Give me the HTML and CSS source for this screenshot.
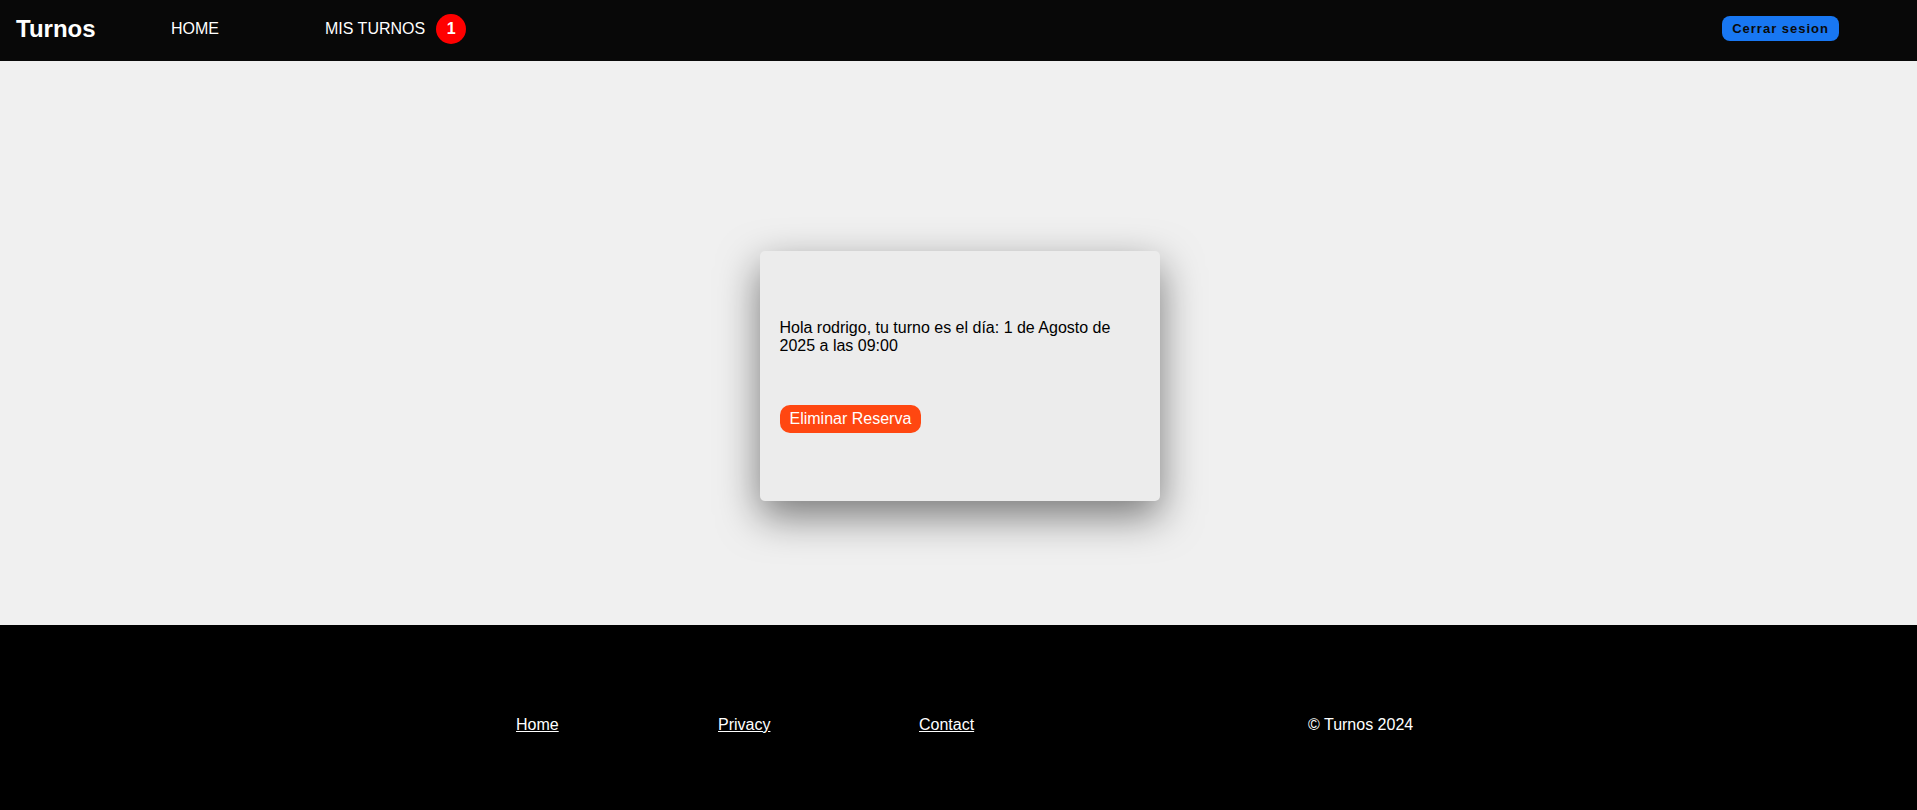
FILE: index.html
```html
<!DOCTYPE html>
<html lang="es">
<head>
<meta charset="utf-8">
<title>Turnos</title>
<link rel="stylesheet" href="styles.css">
</head>
<body>
<header class="navbar">
  <a class="brand" href="#">Turnos</a>
  <nav class="nav-links">
    <a class="nav-link" href="#">HOME</a>
    <a class="nav-link" href="#">MIS TURNOS <span class="badge">1</span></a>
  </nav>
  <button class="logout">Cerrar sesion</button>
</header>
<main class="main">
  <section class="card">
    <p class="card-text">Hola rodrigo, tu turno es el día: 1 de Agosto de 2025 a las 09:00</p>
    <button class="delete">Eliminar Reserva</button>
  </section>
</main>
<footer class="footer">
  <ul class="footer-links">
    <li><a href="#">Home</a></li>
    <li><a href="#">Privacy</a></li>
    <li><a href="#">Contact</a></li>
  </ul>
  <span class="copy">© Turnos 2024</span>
</footer>
</body>
</html>
```
FILE: styles.css
```css
* { box-sizing: border-box; }
html, body { margin: 0; padding: 0; }
body {
  font-family: "Liberation Sans", Arial, sans-serif;
  font-size: 16px;
  background: #f0f0f0;
  color: #000;
  height: 100vh;
  display: flex;
  flex-direction: column;
}
.navbar {
  height: 61px;
  background: #080808;
  display: flex;
  align-items: center;
  padding: 0 0 4px 16px;
}
.brand {
  color: #fff;
  text-decoration: none;
  font-weight: bold;
  font-size: 24px;
  width: 155px;
}
.nav-links {
  display: flex;
  align-items: center;
  flex: 1;
}
.nav-link {
  color: #fff;
  text-decoration: none;
  display: flex;
  align-items: center;
  gap: 11px;
  margin-right: 106px;
}
.badge {
  display: inline-flex;
  align-items: center;
  justify-content: center;
  width: 30px;
  height: 30px;
  border-radius: 50%;
  background: #ff0000;
  color: #fff;
  font-weight: bold;
  font-size: 16px;
}
.logout {
  font-family: "Liberation Sans", Arial, sans-serif;
  background: #1877f2;
  color: #0a0a0a;
  border: none;
  border-radius: 8px;
  font-size: 13px;
  font-weight: bold;
  letter-spacing: 1px;
  height: 25px;
  padding: 0 10px;
  margin-right: 78px;
}
.main {
  flex: 1;
  display: flex;
  justify-content: center;
  align-items: flex-start;
  padding: 190px 0 0 2px;
}
.card {
  width: 400px;
  height: 250px;
  background: #ececec;
  border-radius: 5px;
  box-shadow: 0 15px 40px rgba(0, 0, 0, 0.5);
  padding: 0 20px;
  display: flex;
  flex-direction: column;
  justify-content: center;
  align-items: flex-start;
  gap: 50px;
}
.card-text {
  margin: 0;
}
.delete {
  font-family: "Liberation Sans", Arial, sans-serif;
  font-size: 16px;
  background: #ff4711;
  color: #fff;
  border: none;
  border-radius: 10px;
  height: 28px;
  padding: 0 10px;
}
.footer {
  height: 185px;
  background: #000;
  display: flex;
  align-items: flex-start;
  padding: 91px 0 0 516px;
}
.footer-links {
  list-style: none;
  margin: 0;
  padding: 0;
  display: flex;
}
.footer-links li {
  width: 201px;
}
.footer-links li:first-child {
  width: 202px;
}
.footer-links a {
  color: #fff;
}
.copy {
  color: #fff;
  margin-left: 188px;
}
```
